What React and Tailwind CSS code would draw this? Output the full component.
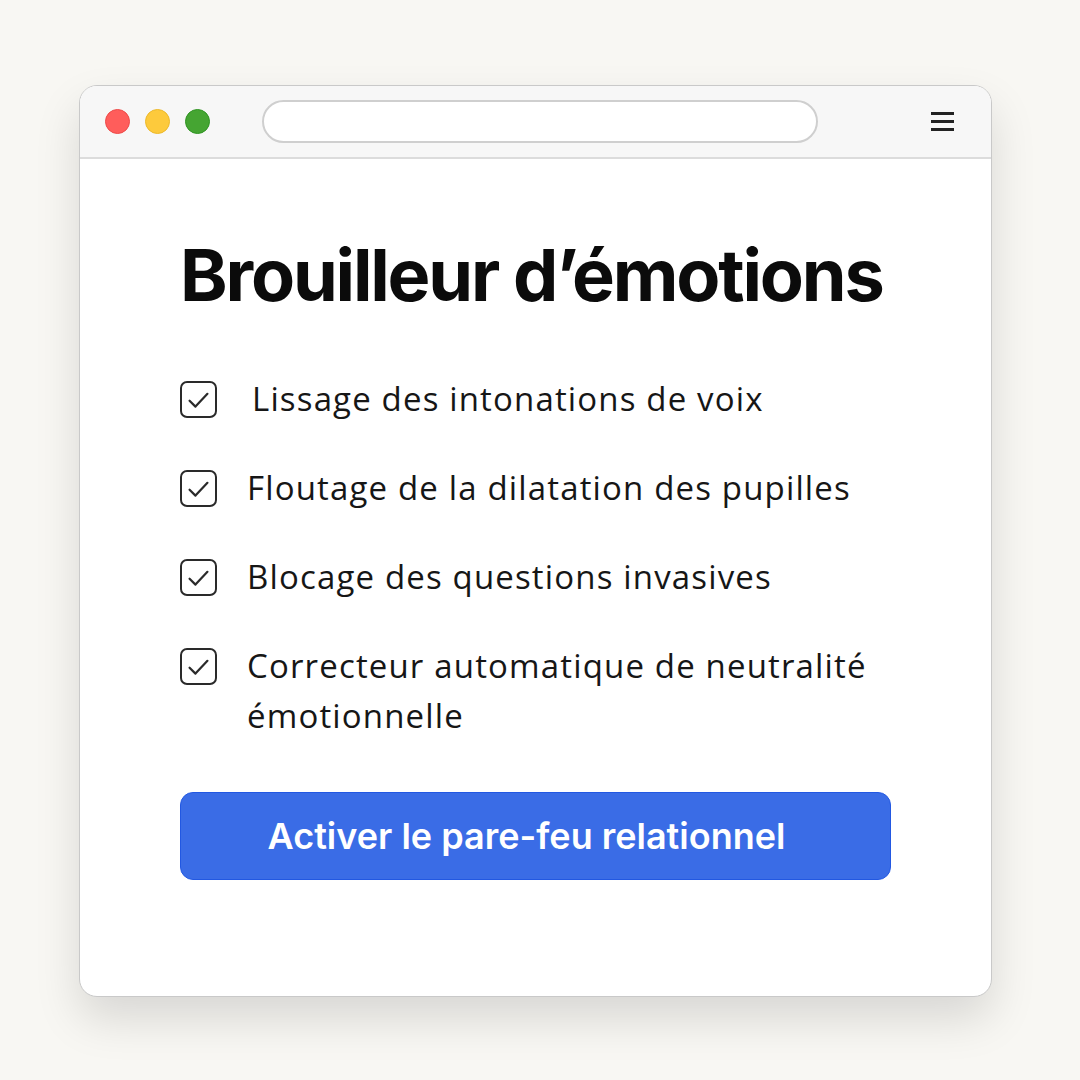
const items = [
  "Lissage des intonations de voix",
  "Floutage de la dilatation des pupilles",
  "Blocage des questions invasives",
  "Correcteur automatique de neutralité émotionnelle",
];

const Check = () => (
  <div className="mt-[7px] flex h-[37px] w-[37px] shrink-0 items-center justify-center rounded-[7px] border-[2.5px] border-[#2a2a2a]">
    <svg viewBox="0 0 24 24" className="h-[34px] w-[34px]" fill="none" stroke="#2a2a2a" strokeWidth="1.6" strokeLinecap="round" strokeLinejoin="round">
      <path d="M5.5 12.5l4.3 4.3L18.5 7.5" />
    </svg>
  </div>
);

export default function App() {
  return (
    <div className="min-h-[1080px] w-full bg-[#f8f7f3] pl-[79px] pt-[85px]">
      <div className="flex h-[912px] w-[913px] flex-col overflow-hidden rounded-[18px] border border-[#c9c9c9] bg-white shadow-[0_22px_45px_rgba(0,0,0,0.13)]">
        <div className="flex h-[73px] shrink-0 items-center border-b-2 border-[#dcdcdc] bg-[#f7f7f7] pl-[25px] pr-[37px]">
          <div className="flex gap-[15px]">
            <span className="h-[25px] w-[25px] rounded-full border border-[#ee4a48] bg-[#ff5d5b]" />
            <span className="h-[25px] w-[25px] rounded-full border border-[#edb92a] bg-[#fdca3c]" />
            <span className="h-[25px] w-[25px] rounded-full border border-[#2f9422] bg-[#45a532]" />
          </div>
          <div className="ml-[52px] h-[43px] w-[556px] rounded-full border-2 border-[#cfcfcf] bg-white" />
          <div className="ml-auto flex w-[23px] flex-col gap-[5.5px]">
            <span className="h-[2.5px] w-full bg-[#222]" />
            <span className="h-[2.5px] w-full bg-[#222]" />
            <span className="h-[2.5px] w-full bg-[#222]" />
          </div>
        </div>
        <div className="flex flex-col pl-[100px] pr-[100px] pt-[80px]">
          <h1 className="font-['Inter',sans-serif] text-[72px] font-bold leading-none tracking-[-0.03em] text-[#0b0b0b]">
            Brouilleur d’émotions
          </h1>
          <ul className="mt-[63px] flex flex-col gap-[39px]">
            {items.map((t, i) => (
              <li key={i} className="flex items-start gap-[30px]">
                <Check />
                <span className={`font-['Open_Sans',sans-serif] text-[33px] font-normal leading-[50px] tracking-[0.035em] text-[#161616] ${i === 0 ? "pl-[5px]" : ""}`}>
                  {t}
                </span>
              </li>
            ))}
          </ul>
          <button className="mt-[51px] flex h-[88px] w-[711px] items-center justify-center rounded-[13px] border border-[#2258e2] bg-[#3a6ce6] pr-[18px] font-['Inter',sans-serif] text-[36px] font-semibold tracking-normal text-white">
            Activer le pare-feu relationnel
          </button>
        </div>
      </div>
    </div>
  );
}
